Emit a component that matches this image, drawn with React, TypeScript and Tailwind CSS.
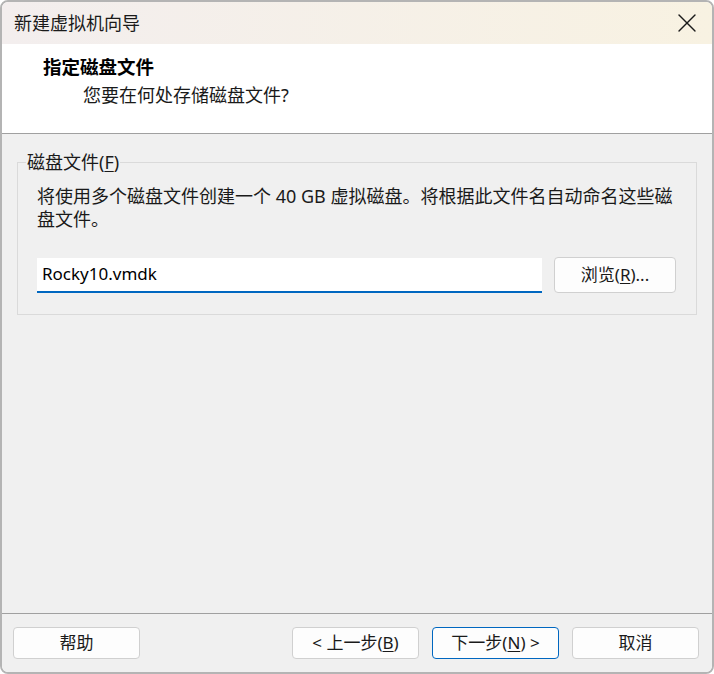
import { X } from 'lucide-react'

const FONT = '"Noto Sans", "Noto Sans CJK SC", sans-serif'

interface DialogButtonProps {
  label: React.ReactNode
  primary?: boolean
}

const DialogButton = ({ label, primary }: DialogButtonProps) => (
  <button
    className={
      primary
        ? 'w-[127px] h-[32px] rounded-[4px] border border-[#0067c0] bg-[#fdfdfd] text-[17px] text-[#1a1a1a] flex items-center justify-center'
        : 'w-[127px] h-[32px] rounded-[4px] border border-[#d0d0d0] bg-[#fdfdfd] text-[17px] text-[#1a1a1a] flex items-center justify-center'
    }
  >
    <span>{label}</span>
  </button>
)

const Mnemonic = ({ k }: { k: string }) => (
  <span>
    (<span className="underline underline-offset-2">{k}</span>)
  </span>
)

export default function App() {
  return (
    <div className="w-[714px] h-[674px] bg-white" style={{ fontFamily: FONT }}>
      <div className="w-full h-full flex flex-col border-2 border-[#b4b4b4] rounded-[8px] overflow-hidden">
        {/* title bar */}
        <div className="h-[42px] shrink-0 flex items-center justify-between pl-[12px] pr-[9px] bg-gradient-to-r from-[#f3eeee] to-[#f8f2e2]">
          <span className="text-[18px] text-[#1a1a1a] leading-none">新建虚拟机向导</span>
          <X size={32} strokeWidth={1} className="text-[#1a1a1a]" />
        </div>

        {/* header */}
        <div className="h-[90px] shrink-0 bg-white border-b border-[#a0a0a0] pl-[41px] pt-[11px]">
          <div className="text-[18.5px] font-bold text-black leading-[24px]">指定磁盘文件</div>
          <div className="text-[18px] text-[#1a1a1a] leading-[24px] pl-[40px] mt-[4px]">您要在何处存储磁盘文件?</div>
        </div>

        {/* body */}
        <div className="flex-1 bg-[#f0f0f0] px-[15px] pt-[17px]">
          <fieldset className="border border-[#dadada] px-[19px] pb-[21px] pt-[12px]">
            <legend className="ml-[-11px] px-[1px] text-[18px] text-[#1a1a1a] leading-[22px]">
              磁盘文件<Mnemonic k="F" />
            </legend>
            <p className="text-[18px] text-[#1a1a1a] leading-[23px] pr-[2px]">
              将使用多个磁盘文件创建一个 40 GB 虚拟磁盘。将根据此文件名自动命名这些磁盘文件。
            </p>
            <div className="mt-[26px] flex items-center gap-[12px]">
              <div className="w-[505px] h-[35px] bg-white border-b-2 border-[#0067c0] flex items-center pl-[5px] text-[17px] text-black">
                Rocky10.vmdk
              </div>
              <button className="w-[122px] h-[36px] rounded-[4px] border border-[#d0d0d0] bg-[#fdfdfd] text-[17px] text-[#1a1a1a] flex items-center justify-center">
                <span>浏览<Mnemonic k="R" />...</span>
              </button>
            </div>
          </fieldset>
        </div>

        {/* footer */}
        <div className="h-[59px] shrink-0 bg-[#f0f0f0] border-t border-[#a0a0a0] flex items-start pt-[13px] pl-[11px] pr-[13px]">
          <DialogButton label="帮助" />
          <div className="flex-1" />
          <div className="flex gap-[13px]">
            <DialogButton label={<>&lt; 上一步<Mnemonic k="B" /></>} />
            <DialogButton label={<>下一步<Mnemonic k="N" /> &gt;</>} primary />
            <DialogButton label="取消" />
          </div>
        </div>
      </div>
    </div>
  )
}
